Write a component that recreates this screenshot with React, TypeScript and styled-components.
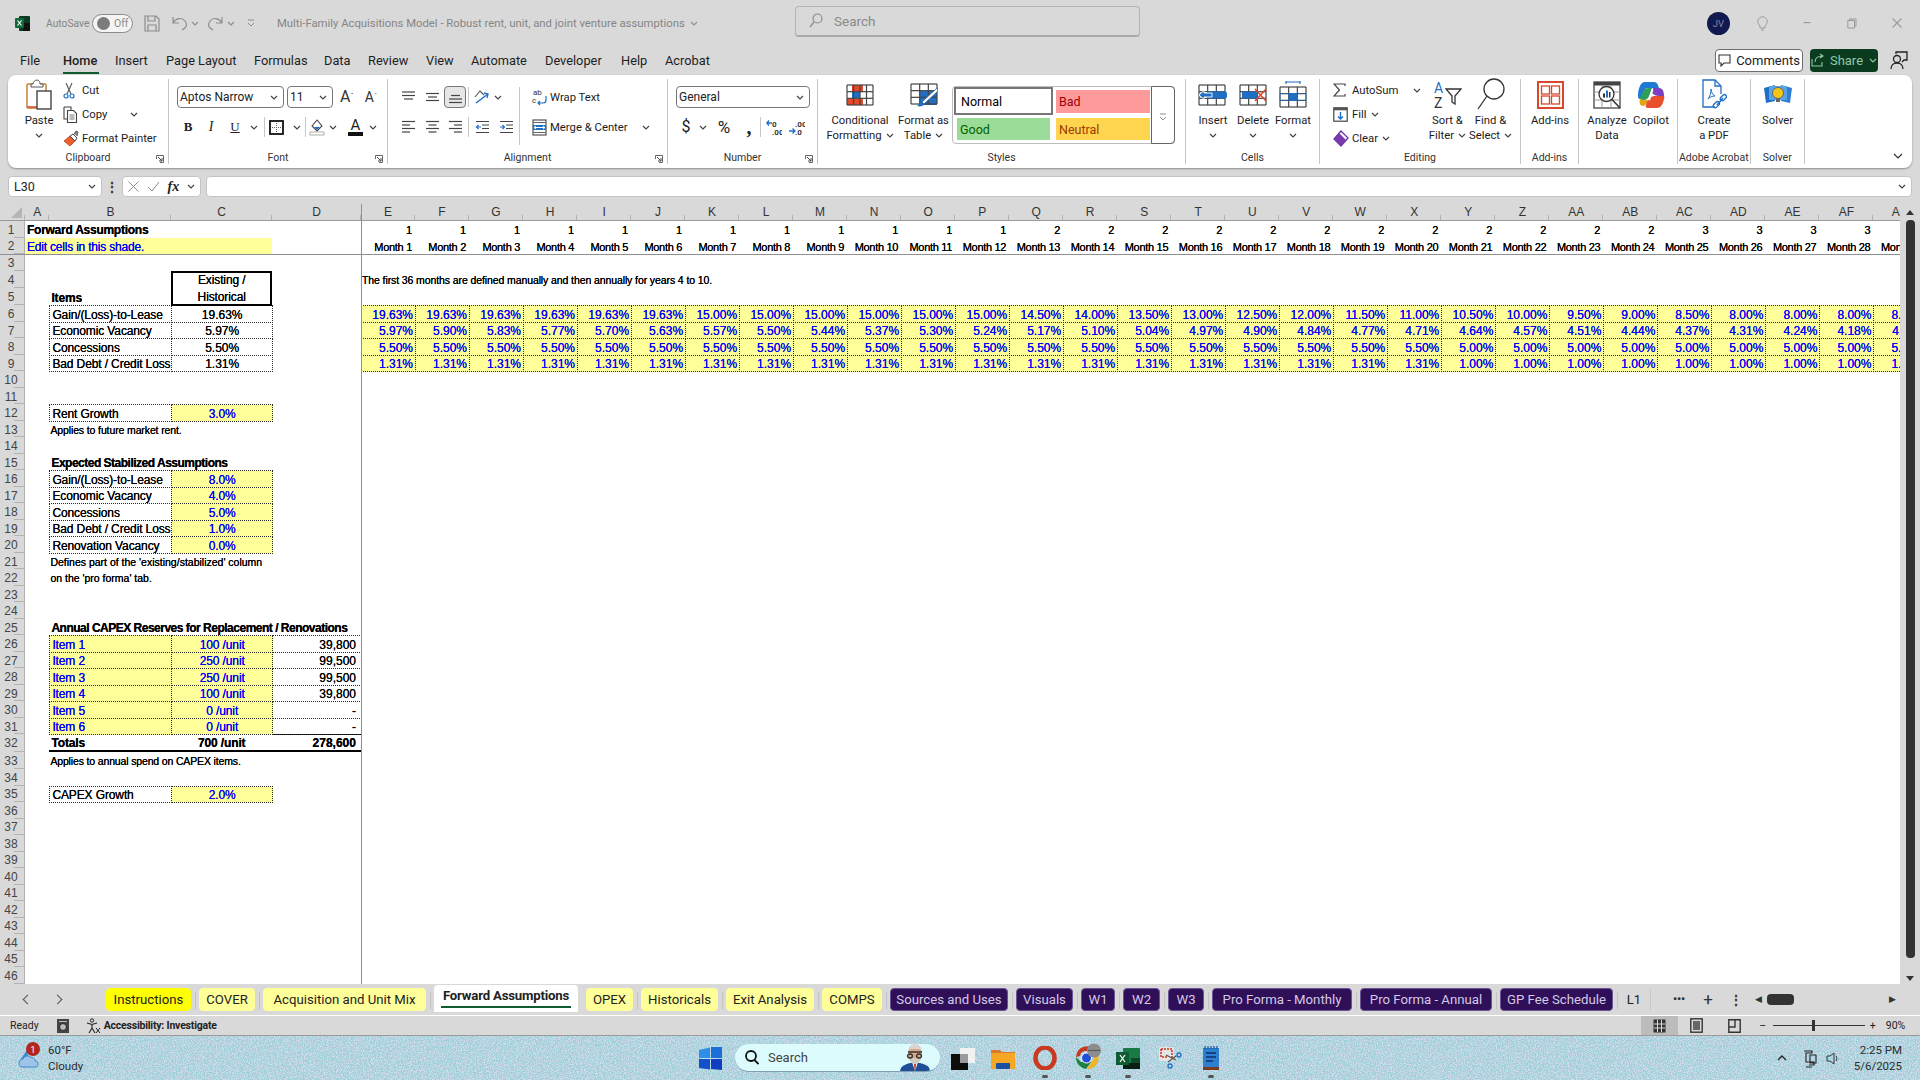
import React from 'react'
import styled, { createGlobalStyle } from 'styled-components'

const UI = `Roboto, 'Liberation Sans', sans-serif`
const CELL = `'Liberation Sans', Arial, sans-serif`

const GlobalStyle = createGlobalStyle`
  html, body { margin: 0; padding: 0; background: #d9d9d9; }
  * { box-sizing: border-box; }
  svg { display: block; flex: none; }
`

/* ---------- small drawing helpers ---------- */

const Ico = ({ w, h, children }: { w: number; h: number; children?: React.ReactNode }) => (
  <svg width={w} height={h} viewBox={`0 0 ${w} ${h}`} fill='none'>
    {children}
  </svg>
)

const Chev = ({ color = '#444' }: { color?: string }) => (
  <Ico w={8} h={5}>
    <path d='M1 1l3 3 3-3' stroke={color} strokeWidth='1.2' />
  </Ico>
)

const GridLines = ({ w, h, cols, rows, color = '#444' }: any) => {
  const out = []
  for (let i = 0; i <= cols; i++) {
    const x = 1 + ((w - 2) * i) / cols
    out.push(<path key={'c' + i} d={`M${x} 1V${h - 1}`} stroke={color} strokeWidth='1.2' />)
  }
  for (let i = 0; i <= rows; i++) {
    const y = 1 + ((h - 2) * i) / rows
    out.push(<path key={'r' + i} d={`M1 ${y}H${w - 1}`} stroke={color} strokeWidth='1.2' />)
  }
  return <>{out}</>
}

const ExcelLogo = () => (
  <Ico w={15} h={15}>
    <rect x='4' y='0' width='11' height='15' rx='1' fill='#0b3a22' />
    <rect x='8' y='7' width='7' height='8' fill='#111' />
    <rect x='0' y='2' width='9' height='10' rx='1' fill='#10693b' />
    <path d='M2.5 4.5l4 5m0-5l-4 5' stroke='#fff' strokeWidth='1.2' />
  </Ico>
)

const SaveIcon = () => (
  <Ico w={16} h={17}>
    <path d='M1 1h11l3 3v12H1z M4 1v5h7V1 M4 16v-6h8v6' stroke='#8d8d8d' strokeWidth='1.2' />
  </Ico>
)

const UndoIcon = ({ flip }: { flip?: boolean }) => (
  <Ico w={17} h={15}>
    <g transform={flip ? 'matrix(-1 0 0 1 17 0)' : undefined}>
      <path d='M2 1v6h6 M2 7c3-5 9-6 12-2s1 7-3 9' stroke='#8d8d8d' strokeWidth='1.2' />
    </g>
  </Ico>
)

const QatIcon = () => (
  <Ico w={8} h={8}>
    <path d='M1 1h6 M1 4l3 3 3-3' stroke='#8d8d8d' strokeWidth='1' />
  </Ico>
)

const SearchGlass = ({ color = '#8d8d8d' }: { color?: string }) => (
  <Ico w={14} h={15}>
    <circle cx='8.5' cy='5.5' r='4.5' stroke={color} strokeWidth='1.2' />
    <path d='M5 9l-4 5' stroke={color} strokeWidth='1.3' />
  </Ico>
)

const Bulb = () => (
  <Ico w={11} h={15}>
    <path d='M3 10C1 8 .8 6.5 .8 5.5a4.7 4.7 0 0 1 9.4 0c0 1-.2 2.5-2.2 4.5v2H3z M4 14h3' stroke='#9a9a9a' strokeWidth='1' />
  </Ico>
)

const PasteIcon = () => (
  <Ico w={28} h={32}>
    <rect x='2' y='5' width='19' height='24' rx='1' fill='#fff' stroke='#c5813a' strokeWidth='1.5' />
    <path d='M2 28h19' stroke='#d9482b' strokeWidth='1.5' />
    <path d='M8 5c0-2 2-4 4-4s3 2 3 4h3v3H6V5z' fill='#fff' stroke='#555' strokeWidth='1' />
    <rect x='12' y='12' width='14' height='18' fill='#fff' stroke='#444' strokeWidth='1.4' />
  </Ico>
)

const CutIcon = () => (
  <Ico w={12} h={17}>
    <path d='M3 1l5 11M9 1L4 12' stroke='#555' strokeWidth='1.1' />
    <circle cx='3' cy='14' r='2' stroke='#1f6fc4' strokeWidth='1.2' />
    <circle cx='9' cy='14' r='2' stroke='#1f6fc4' strokeWidth='1.2' />
  </Ico>
)

const CopyIcon = () => (
  <Ico w={15} h={17}>
    <path d='M1 1h7v3 M1 1v12h3' stroke='#444' strokeWidth='1.1' />
    <path d='M4.5 4.5h6l3 3v9h-9z' fill='#fff' stroke='#444' strokeWidth='1.1' />
    <path d='M6.5 9h5M6.5 11h5M6.5 13h5' stroke='#777' />
  </Ico>
)

const PainterIcon = () => (
  <Ico w={16} h={17}>
    <path d='M1 11l6-5 5 5-5 5z' fill='#e9602d' stroke='#c53b1a' strokeWidth='.8' />
    <path d='M7 6l5 5 2-3-4-4z' fill='#fff' stroke='#444' />
    <path d='M11 4l2-3 2 1-1 4' fill='#888' stroke='#444' strokeWidth='.8' />
  </Ico>
)

const BorderIcon = () => (
  <Ico w={15} h={15}>
    <rect x='1' y='1' width='13' height='13' stroke='#111' strokeWidth='1.8' />
    <path d='M7.5 3v9M3 7.5h9' stroke='#666' strokeDasharray='1 1' />
  </Ico>
)

const FillIcon = () => (
  <Ico w={16} h={18}>
    <path d='M3 8l5-6 5 6-5 5z' fill='#fff' stroke='#444' strokeWidth='1.1' />
    <path d='M5 9h6l-3 3z' fill='#1f6fc4' />
    <rect x='1' y='14' width='14' height='3' fill='#fff' stroke='#999' strokeWidth='.8' />
  </Ico>
)

const AlignIcon = ({ lines }: { lines: string[] }) => (
  <Ico w={15} h={14}>
    {lines.map((d, i) => (
      <path key={i} d={d} stroke='#444' strokeWidth='1.2' />
    ))}
  </Ico>
)

const OrientIcon = () => (
  <Ico w={17} h={16}>
    <path d='M2 8l5-6 4 4' stroke='#555' strokeWidth='1.1' />
    <path d='M3 14L15 5' stroke='#1f6fc4' strokeWidth='1.5' />
    <path d='M11 4l4 1-1 4' stroke='#1f6fc4' strokeWidth='1.3' />
  </Ico>
)

const IndentIcon = ({ inc }: { inc?: boolean }) => (
  <Ico w={15} h={14}>
    <path d='M1 1.5h13M7 5h7M7 8.5h7M1 12.5h13' stroke='#444' strokeWidth='1.2' />
    {inc ? (
      <path d='M1 7h4M3.5 5l2 2-2 2' stroke='#1f6fc4' strokeWidth='1.2' />
    ) : (
      <path d='M6 7H1.5M3.5 5l-2 2 2 2' stroke='#1f6fc4' strokeWidth='1.2' />
    )}
  </Ico>
)

const WrapIcon = () => (
  <Ico w={15} h={18}>
    <text x='1' y='7' fontFamily={UI} fontSize='8' fill='#333'>ab</text>
    <text x='0' y='15' fontFamily={UI} fontSize='8' fill='#333'>c</text>
    <path d='M14 8v4c0 2-1 3-3 3H6M8 13l-2 2 2 2' stroke='#1f6fc4' strokeWidth='1.2' />
  </Ico>
)

const MergeIcon = () => (
  <Ico w={15} h={17}>
    <rect x='1' y='1' width='13' height='15' fill='#fff' stroke='#444' strokeWidth='1.1' />
    <rect x='1' y='6' width='13' height='5' fill='#1f6fc4' />
    <path d='M2 8.5h11M4 7l-2 1.5L4 10M11 7l2 1.5L11 10' stroke='#fff' />
    <path d='M1 3.5h13M1 13.5h13' stroke='#666' />
  </Ico>
)

const DecimalIcon = ({ inc }: { inc?: boolean }) => (
  <Ico w={16} h={17}>
    <text x='6' y='7.5' fontFamily={UI} fontWeight='700' fontSize='8' fill='#333'>{inc ? '.00' : '0'}</text>
    <text x='6' y='15.5' fontFamily={UI} fontWeight='700' fontSize='8' fill='#333'>{inc ? '.0' : '.00'}</text>
    {inc ? (
      <path d='M0 12h6M3.5 9.5L6 12l-2.5 2.5' stroke='#1f6fc4' strokeWidth='1.3' />
    ) : (
      <path d='M6 4H.8M3 1.5L.8 4 3 6.5' stroke='#1f6fc4' strokeWidth='1.3' />
    )}
  </Ico>
)

const CondFormatIcon = () => (
  <Ico w={28} h={22}>
    <rect x='6' y='1' width='11' height='7' fill='#e2492a' />
    <rect x='6' y='8' width='8' height='6' fill='#1f6fc4' />
    <rect x='1' y='15' width='16' height='6' fill='#e2492a' />
    <GridLines w={28} h={22} cols={4} rows={3} />
  </Ico>
)

const FormatTableIcon = () => (
  <Ico w={28} h={24}>
    <rect x='10' y='8' width='17' height='14' fill='#1f6fc4' />
    <GridLines w={28} h={22} cols={3} rows={3} />
    <path d='M27 5L12 19l2 2L28 8z' fill='#fff' stroke='#2c5f9e' strokeWidth='.8' />
    <path d='M12 19c-3 0-3 3-5 4 3 1 7 0 7-2z' fill='#1f6fc4' />
  </Ico>
)

const InsertIcon = () => (
  <Ico w={30} h={22}>
    <GridLines w={28} h={22} cols={3} rows={3} />
    <rect x='9' y='7.5' width='20' height='7' rx='2' fill='#1f6fc4' />
    <path d='M14 9H6V6.5L1 11l5 4.5V13h8z' fill='#1f6fc4' stroke='#fff' strokeWidth='.9' />
  </Ico>
)

const DeleteIcon = () => (
  <Ico w={28} h={22}>
    <GridLines w={28} h={22} cols={3} rows={3} />
    <rect x='3' y='7.5' width='15' height='7' fill='#1f6fc4' />
    <path d='M16 5l11 12M27 5L16 17' stroke='#e2492a' strokeWidth='1.6' />
  </Ico>
)

const FormatCellsIcon = () => (
  <Ico w={28} h={27}>
    <path d='M7 1h14M7 0v3M21 0v3' stroke='#1f6fc4' strokeWidth='1.2' />
    <g transform='translate(0 5)'>
      <GridLines w={28} h={22} cols={3} rows={3} />
      <rect x='9.5' y='7.5' width='9' height='7' fill='#1f6fc4' />
      <rect x='1' y='7.5' width='26' height='7' stroke='#1f6fc4' strokeWidth='.6' />
    </g>
  </Ico>
)

const SigmaIcon = () => (
  <Ico w={13} h={14}>
    <path d='M12 3V1H1l5.5 6L1 13h11v-2' stroke='#444' strokeWidth='1.2' />
  </Ico>
)

const FillDownIcon = () => (
  <Ico w={15} h={15}>
    <rect x='.8' y='.8' width='13.4' height='13.4' stroke='#444' strokeWidth='1.2' />
    <rect x='.8' y='.8' width='13.4' height='2.5' fill='#555' />
    <path d='M7.5 5v7M5 9.5l2.5 2.5L10 9.5' stroke='#1f6fc4' strokeWidth='1.4' />
  </Ico>
)

const EraserIcon = () => (
  <Ico w={16} h={17}>
    <path d='M1 9l7-8 7 7-7 8z' fill='#fff' stroke='#6a2fa0' strokeWidth='1.3' />
    <path d='M1 9l5-6 7 7-5 6z' fill='#7a3bb0' />
  </Ico>
)

const SortIcon = () => (
  <Ico w={28} h={28}>
    <text x='0' y='12' fontFamily={UI} fontSize='14' fill='#1f6fc4'>A</text>
    <text x='0' y='27' fontFamily={UI} fontSize='14' fill='#333'>Z</text>
    <path d='M12 8h15l-6 7v8l-3-2v-6z' stroke='#333' strokeWidth='1.3' />
  </Ico>
)

const BigGlass = () => (
  <Ico w={28} h={33}>
    <circle cx='17' cy='11' r='10' stroke='#333' strokeWidth='1.3' />
    <path d='M10 18L1 31' stroke='#333' strokeWidth='1.3' />
  </Ico>
)

const AddinsIcon = () => (
  <Ico w={27} h={28}>
    <rect x='1' y='1' width='25' height='26' fill='#fff' stroke='#d9482b' strokeWidth='2' />
    <rect x='4.5' y='5' width='8' height='8' stroke='#d9482b' strokeWidth='1.3' />
    <rect x='14.5' y='5' width='8' height='8' stroke='#d9482b' strokeWidth='1.3' />
    <rect x='4.5' y='15' width='8' height='8' stroke='#d9482b' strokeWidth='1.3' />
    <rect x='14.5' y='15' width='8' height='8' stroke='#d9482b' strokeWidth='1.3' />
  </Ico>
)

const AnalyzeIcon = () => (
  <Ico w={28} h={28}>
    <rect x='1' y='1' width='26' height='26' fill='#fff' stroke='#444' strokeWidth='1.3' />
    <rect x='1' y='1' width='26' height='3.5' fill='#444' />
    <path d='M1 11h26M1 19h26M9 4v23M18 4v23' stroke='#999' />
    <circle cx='13.5' cy='13' r='7.5' fill='#fff' stroke='#333' strokeWidth='1.3' />
    <path d='M19 18.5L27 27' stroke='#333' strokeWidth='1.5' />
    <rect x='10' y='12.5' width='2' height='4' fill='#333' />
    <rect x='13' y='9.5' width='2' height='7' fill='#1f6fc4' />
    <rect x='16' y='11' width='1.5' height='5.5' fill='#333' />
  </Ico>
)

const CopilotIcon = () => (
  <Ico w={28} h={28}>
    <path d='M8 1h9c2 0 3 1 4 3l1 3H12C8 7 7 9 6 12l-2 5c-1 2-3 1-3-2 0-6 2-14 7-14z' fill='#1f7ad6' />
    <path d='M3 17l3-6c1-3 3-4 6-4h3l-2 6c-1 3-3 6-6 6H5c-1 0-2-1-2-2z' fill='#2e9e57' />
    <path d='M6 19h5l-1 3c-1 2-3 3-5 3-2-1-3-3-2-7z' fill='#e5a318' />
    <path d='M16 7h6c4 0 5 4 5 8v1l-5-1c-3 0-5-1-7-3z' fill='#7b3fbf' />
    <path d='M20 27h-9c-2 0-3-1-2-3l1-3c1-2 4-6 7-6h9c1 0 2 1 1 3-1 5-3 9-7 9z' fill='#ea4f2c' />
    <path d='M14.5 8l2 .5-3.5 11-2-.5z' fill='#fff' />
  </Ico>
)

const PdfIcon = () => (
  <Ico w={26} h={32}>
    <path d='M14 28H2V1h12l6 6v8' stroke='#1f6fc4' strokeWidth='1.3' />
    <path d='M14 1v6h6' stroke='#1f6fc4' strokeWidth='1.3' />
    <path d='M7 20c2-2 3-7 3-10 0 3 2 6 4 7-3 0-5 1-7 3z' stroke='#1f6fc4' />
    <path d='M16 26l6-7' stroke='#1f6fc4' strokeWidth='1.6' />
    <rect x='12' y='24' width='7' height='4' rx='2' transform='rotate(-45 15 26)' stroke='#1f6fc4' strokeWidth='1.3' />
    <rect x='19' y='17' width='7' height='4' rx='2' transform='rotate(-45 22 19)' stroke='#1f6fc4' strokeWidth='1.3' />
  </Ico>
)

const SolverIcon = () => (
  <Ico w={30} h={24}>
    <path d='M1 5l11-3v16L3 20z' fill='#1f6fc4' />
    <path d='M29 5L18 2v16l9 2z' fill='#2f7ed8' />
    <path d='M6 3h18v14H6z' fill='#5aa2e6' />
    <circle cx='15' cy='10' r='5.5' fill='#f5c518' stroke='#555' strokeWidth='.8' />
    <rect x='13' y='15' width='4' height='4' fill='#666' />
  </Ico>
)

const CommentIcon = ({ color = '#333' }: { color?: string }) => (
  <Ico w={13} h={13}>
    <path d='M1 1h11v8H6l-3 3V9H1z' stroke={color} strokeWidth='1.1' />
  </Ico>
)

const ShareIcon = () => (
  <Ico w={13} h={14}>
    <path d='M1 6v7h10V9' stroke='#8fc7a8' strokeWidth='1.1' />
    <path d='M4 9c0-4 3-6 8-6M9 1l3 2-3 2' stroke='#8fc7a8' strokeWidth='1.1' />
  </Ico>
)

const CoachIcon = () => (
  <Ico w={18} h={19}>
    <circle cx='7' cy='8' r='3.5' stroke='#222' strokeWidth='1.3' />
    <path d='M1 18c0-4 3-6 6-6s6 2 6 6' stroke='#222' strokeWidth='1.3' />
    <path d='M6 3V1h11v8h-3l-2 2' stroke='#222' strokeWidth='1.3' />
  </Ico>
)

const Launcher = () => (
  <Ico w={8} h={8}>
    <path d='M.5 4V.5H7.5V7.5H4' stroke='#666' />
    <path d='M2 2l4 4M6 3v3H3' stroke='#444' />
  </Ico>
)

const MacroIcon = () => (
  <Ico w={14} h={16}>
    <rect x='1' y='1' width='12' height='14' fill='#444' />
    <circle cx='7' cy='9' r='3.5' fill='#bbb' stroke='#222' />
    <path d='M3 3.5h8' stroke='#bbb' />
  </Ico>
)

const AccessIcon = () => (
  <Ico w={15} h={16}>
    <circle cx='6' cy='2.5' r='1.7' stroke='#222' />
    <path d='M1 5l5 1.5L11 5M6 6.5V10l-3 5M6 10l3 5' stroke='#222' strokeWidth='1.1' />
    <path d='M10 10l4 5M14 10l-4 5' stroke='#222' />
  </Ico>
)

const ViewNormal = () => (
  <Ico w={13} h={14}>
    <rect x='.5' y='.5' width='12' height='13' fill='#333' />
    <path d='M4.5 1v12M8.5 1v12M1 5h11M1 9h11' stroke='#ddd' />
  </Ico>
)

const ViewLayout = () => (
  <Ico w={13} h={15}>
    <rect x='.8' y='.8' width='11.4' height='13.4' stroke='#333' strokeWidth='1.4' />
    <rect x='3' y='3' width='7' height='9' fill='#666' />
  </Ico>
)

const ViewBreak = () => (
  <Ico w={13} h={14}>
    <path d='M.8 13.2V.8H12.2V13.2zM.8 8H7V.8' stroke='#333' strokeWidth='1.4' />
  </Ico>
)

const WeatherIcon = () => (
  <Ico w={24} h={20}>
    <path d='M9 2L1 14h10z' fill='#3d88cf' />
    <path d='M5 19c-3 0-4-2-4-4s2-4 4-4c1-3 5-4 7-2 3 0 5 2 5 4 2 0 3 1 3 3s-1 3-3 3z' fill='#9fc4ea' stroke='#3d88cf' />
  </Ico>
)

const WinLogo = () => (
  <Ico w={23} h={23}>
    <path d='M0 3l11-2.5V11H0z' fill='#2f8fe8' />
    <path d='M12 0l11-1v12H12z' fill='#1c6fd8' />
    <path d='M0 12h11v10.5L0 21z' fill='#1450c8' />
    <path d='M12 12h11v11l-11-1z' fill='#0f3fbf' />
  </Ico>
)

const BingGuy = () => (
  <Ico w={32} h={28}>
    <path d='M1 28c1-6 7-7 10-8h10c3 1 10 2 10 8z' fill='#1f4f96' />
    <path d='M13 19l3 9 3-9z' fill='#fff' />
    <path d='M15 21h2l-.5 6h-1z' fill='#b33a2a' />
    <ellipse cx='16' cy='11' rx='7' ry='9' fill='#d8a888' />
    <path d='M9 10c0-6 3-9 7-9s7 3 7 8l-2-3H11z' fill='#d9d4cc' />
    <path d='M10 14c1 6 4 7 6 7s5-1 6-7l-3 1h-6z' fill='#cfc9bf' />
    <path d='M9 9h14M11 11a2.5 2 0 1 0 .01 0M20 11a2.5 2 0 1 0 .01 0' stroke='#333' strokeWidth='1.3' />
  </Ico>
)

const TaskViewIcon = () => (
  <Ico w={24} h={23}>
    <rect x='9' y='1' width='15' height='15' fill='#f2f2f2' />
    <rect x='0' y='7' width='17' height='16' fill='#0c0c0c' />
    <rect x='9' y='7' width='8' height='9' fill='#9a9a9a' />
  </Ico>
)

const FolderIcon = () => (
  <Ico w={24} h={21}>
    <path d='M0 2h9l2 2h13v5H0z' fill='#d9792b' />
    <rect x='0' y='5' width='24' height='16' fill='#f5a623' />
    <rect x='5' y='15' width='14' height='6' rx='1' fill='#1b4fa0' />
  </Ico>
)

const OperaIcon = () => (
  <Ico w={24} h={24}>
    <ellipse cx='12' cy='12' rx='9.5' ry='10.5' stroke='#c8391f' strokeWidth='4.5' />
  </Ico>
)

const ChromeIcon = () => (
  <Ico w={28} h={30}>
    <path d='M2 14a11 11 0 0 1 20-6H12a6 6 0 0 0-6 5z' fill='#c8391f' />
    <path d='M2 14c0 6 4 11 10 12l5-7H7z' fill='#22803f' />
    <path d='M22 8a11 11 0 0 1-9 18l5-8a6 6 0 0 0-1-10z' fill='#f0b429' />
    <circle cx='12.5' cy='15' r='5' fill='#1f4fd8' stroke='#fff' strokeWidth='1' />
    <circle cx='20' cy='7.5' r='7' fill='#8c8c8c' />
    <path d='M14 7.5h12' stroke='#555' />
  </Ico>
)

const ExcelTask = () => (
  <Ico w={24} h={21}>
    <rect x='7' y='0' width='17' height='21' rx='1' fill='#1a7a45' />
    <rect x='15' y='10' width='9' height='11' fill='#0b4a2a' />
    <rect x='7' y='15' width='17' height='6' fill='#0a1f14' />
    <rect x='0' y='4' width='13' height='13' fill='#0f5c34' />
    <path d='M4 7l5 7m0-7l-5 7' stroke='#fff' strokeWidth='1.2' />
  </Ico>
)

const SnipIcon = () => (
  <Ico w={24} h={24}>
    <rect x='1' y='1' width='15' height='14' rx='2' fill='#e8e4e4' />
    <path d='M3 3h11v10' stroke='#c8391f' strokeWidth='1.6' strokeDasharray='2 1' />
    <path d='M3 3v8h6' stroke='#c8391f' strokeWidth='1.6' strokeDasharray='2 1' />
    <path d='M8 9l10 5M10 16l8-6' stroke='#555' strokeWidth='1.2' />
    <circle cx='21' cy='9' r='2' stroke='#1f6fc4' strokeWidth='1.3' />
    <circle cx='12' cy='20' r='2' stroke='#1f6fc4' strokeWidth='1.3' />
  </Ico>
)

const NotesIcon = () => (
  <Ico w={18} h={26}>
    <path d='M1 3h16v20H1z' fill='#2d7fd0' />
    <path d='M3 1v3M6 1v3M9 1v3M12 1v3M15 1v3' stroke='#1a4f9a' strokeWidth='1.2' />
    <path d='M4 8h10M4 12h10M4 16h7' stroke='#0d2f6b' strokeWidth='1.4' />
    <rect x='1' y='22' width='16' height='3' fill='#7a3b1f' />
  </Ico>
)

const SearchGlassDark = () => (
  <Ico w={14} h={15}>
    <circle cx='6' cy='6' r='5' stroke='#111' strokeWidth='1.8' />
    <path d='M9.5 10l4 4' stroke='#111' strokeWidth='1.8' />
  </Ico>
)

/* ---------- window chrome ---------- */

const Page = styled.div`
  width: 1920px;
  height: 1080px;
  overflow: hidden;
  display: flex;
  flex-direction: column;
  background: #d9d9d9;
  font-family: ${UI};
  color: #222;
`

const TitleBar = styled.div`
  height: 42px;
  flex: none;
  display: flex;
  align-items: center;
  padding-left: 15px;
  padding-top: 4px;
  color: #858585;
  font-size: 10.3px;
`

const Slot = styled.div<{ $w?: number; $ml?: number; $start?: boolean }>`
  flex: none;
  display: flex;
  align-items: center;
  justify-content: ${p => (p.$start ? 'flex-start' : 'center')};
  width: ${p => (p.$w ? `${p.$w}px` : 'auto')};
  margin-left: ${p => p.$ml || 0}px;
  white-space: nowrap;
`

const Toggle = styled.div`
  width: 41px;
  height: 19px;
  border: 1px solid #8a8a8a;
  border-radius: 10px;
  background: #f4f4f4;
  display: flex;
  align-items: center;
  padding-left: 4px;
  gap: 4px;
  font-size: 10.5px;
  color: #8a8a8a;

  &::before {
    content: '';
    width: 13px;
    height: 13px;
    border-radius: 50%;
    background: #7c7c7c;
  }
`

const DocTitle = styled.span`
  display: flex;
  align-items: center;
  gap: 5px;
  font-size: 11.3px;
`

const SearchBox = styled.div`
  width: 345px;
  height: 31px;
  margin-left: 100px;
  margin-top: -4px;
  flex: none;
  display: flex;
  align-items: center;
  gap: 11px;
  padding-left: 13px;
  border: 1px solid #b4b4b4;
  border-bottom: 2px solid #aaa;
  border-radius: 4px;
  font-size: 13.5px;
  color: #8a8a8a;
`

const Avatar = styled.div`
  width: 23px;
  height: 23px;
  border-radius: 50%;
  background: #111a4e;
  color: #7f86a8;
  font-size: 9.5px;
  display: flex;
  align-items: center;
  justify-content: center;
`

const Glyph = styled.span<{ $size?: number; $color?: string; $weight?: number }>`
  font-size: ${p => p.$size || 14}px;
  color: ${p => p.$color || '#9a9a9a'};
  font-weight: ${p => p.$weight || 400};
  line-height: 1;
`

const MenuRow = styled.div`
  height: 33px;
  flex: none;
  display: flex;
  align-items: center;
  padding: 3px 0 0 20px;
  font-size: 12.8px;
  color: #1e1e1e;
`

const MenuTab = styled.div<{ $w: number; $active?: boolean }>`
  width: ${p => p.$w}px;
  position: relative;
  font-weight: ${p => (p.$active ? 500 : 400)};

  &::after {
    content: '';
    display: ${p => (p.$active ? 'block' : 'none')};
    position: absolute;
    left: 0;
    bottom: -6px;
    width: 36px;
    height: 2px;
    background: #0e5c2f;
  }
`

const MenuRight = styled.div`
  margin-left: auto;
  display: flex;
  align-items: center;
  padding-right: 12px;
  gap: 7px;
`

const CommentsBtn = styled.div`
  width: 88px;
  height: 23px;
  display: flex;
  align-items: center;
  justify-content: center;
  gap: 5px;
  background: #fff;
  border: 1px solid #6e6e6e;
  border-radius: 4px;
  font-size: 13px;
  color: #222;
`

const ShareBtn = styled.div`
  width: 68px;
  height: 23px;
  display: flex;
  align-items: center;
  justify-content: center;
  gap: 6px;
  background: #0a3b1e;
  border-radius: 4px;
  font-size: 13px;
  color: #8fc7a8;
  margin-right: 5px;
`

/* ---------- ribbon ---------- */

const Ribbon = styled.div`
  height: 93px;
  flex: none;
  margin: 0 8px;
  background: #fff;
  border-radius: 8px;
  box-shadow: 0 1px 2px rgba(0, 0, 0, 0.35);
  display: flex;
  padding-top: 4px;
  font-size: 11.3px;
  color: #1c1c1c;
  position: relative;
`

const Group = styled.div<{ $w: number }>`
  width: ${p => p.$w}px;
  height: 85px;
  flex: none;
  display: flex;
  flex-direction: column;
  border-right: 1.5px solid #c6c6c6;
  position: relative;
`

const GroupBody = styled.div<{ $pl?: number; $col?: boolean }>`
  height: 73px;
  flex: none;
  display: flex;
  flex-direction: ${p => (p.$col ? 'column' : 'row')};
  padding-left: ${p => p.$pl || 0}px;
`

const GroupLabel = styled.div`
  height: 12px;
  line-height: 12px;
  text-align: center;
  font-size: 10.5px;
  color: #333;
  white-space: nowrap;
`

const LauncherSpot = styled.div`
  position: absolute;
  right: 4px;
  bottom: 1px;
`

const BigBtn = styled.div<{ $w: number }>`
  width: ${p => p.$w}px;
  flex: none;
  display: flex;
  flex-direction: column;
  align-items: center;
  line-height: 15px;
  white-space: nowrap;
`

const BigIcon = styled.div`
  height: 34px;
  padding-bottom: 3px;
  display: flex;
  align-items: center;
  justify-content: center;
`

const InlineChev = styled.span`
  display: inline-flex;
  align-items: center;
  gap: 4px;
`

const ChevLine = styled.div`
  height: 15px;
  display: flex;
  align-items: center;
`

const SmallCol = styled.div<{ $ml?: number; $w?: number }>`
  display: flex;
  flex-direction: column;
  margin-left: ${p => p.$ml || 0}px;
  width: ${p => (p.$w ? `${p.$w}px` : 'auto')};
`

const SmallBtn = styled.div<{ $w?: number }>`
  height: 24px;
  display: flex;
  align-items: center;
  white-space: nowrap;
  width: ${p => (p.$w ? `${p.$w}px` : 'auto')};
  position: relative;
  top: -1px;
`

const SmallIcon = styled.div`
  width: 19px;
  display: flex;
  justify-content: flex-start;
`

const ToolRow = styled.div<{ $mt?: number }>`
  display: flex;
  align-items: center;
  height: 22px;
  margin-top: ${p => p.$mt || 0}px;
`

const Select = styled.div<{ $w: number }>`
  width: ${p => p.$w}px;
  height: 22px;
  flex: none;
  display: flex;
  align-items: center;
  justify-content: space-between;
  padding: 0 5px 0 2px;
  border: 1px solid #777;
  border-radius: 4px;
  font-size: 12px;
  color: #222;
`

const Sep = styled.div<{ $h?: number; $ml?: number; $mr?: number }>`
  width: 1px;
  height: ${p => p.$h || 20}px;
  flex: none;
  background: #c6c6c6;
  margin-left: ${p => p.$ml || 0}px;
  margin-right: ${p => p.$mr || 0}px;
`

const Pressed = styled.div`
  width: 22px;
  height: 22px;
  display: flex;
  align-items: center;
  justify-content: center;
  background: #e6e6e6;
  border: 1px solid #777;
  border-radius: 4px;
`

const Big = styled.span<{ $w?: number; $i?: boolean; $u?: boolean; $size?: number }>`
  font-family: 'Liberation Serif', serif;
  font-size: ${p => p.$size || 14}px;
  font-weight: ${p => p.$w || 400};
  font-style: ${p => (p.$i ? 'italic' : 'normal')};
  text-decoration: ${p => (p.$u ? 'underline' : 'none')};
  color: #222;
`

const FontColor = styled.div`
  width: 13px;
  display: flex;
  flex-direction: column;
  align-items: center;
  font-size: 15px;
  line-height: 13px;
  color: #222;

  &::after {
    content: '';
    width: 15px;
    height: 4px;
    background: #111;
  }
`

const Gallery = styled.div`
  width: 223px;
  height: 58px;
  margin: 7px 0 0 0;
  flex: none;
  display: flex;
  border: 1px solid #bdbdbd;
  border-radius: 4px;
`

const StyleGrid = styled.div`
  width: 199px;
  display: grid;
  grid-template-columns: 99px 100px;
  grid-template-rows: 28px 27px;
  padding: 0 1px;
`

const StyleChip = styled.div<{ $bg: string; $fg: string; $normal?: boolean }>`
  display: flex;
  align-items: center;
  padding-left: ${p => (p.$normal ? 5 : 3)}px;
  margin: ${p => (p.$normal ? '0' : '3px 3px 2px 3px')};
  background: ${p => p.$bg};
  color: ${p => p.$fg};
  border: ${p => (p.$normal ? '2px solid #777' : 'none')};
  font-size: 12.5px;
`

const GalleryScroll = styled.div`
  flex: 1;
  border: 1px solid #666;
  border-radius: 0 4px 4px 0;
  margin: -1px;
  padding-top: 26px;
  display: flex;
  justify-content: center;
`

const CollapseSpot = styled.div`
  position: absolute;
  right: 9px;
  bottom: 9px;
`

/* ---------- formula bar ---------- */

const FormulaBar = styled.div`
  height: 21px;
  flex: none;
  margin: 8px 8px 0;
  display: flex;
  align-items: stretch;
`

const FormulaBox = styled.div<{ $w?: number; $ml?: number; $grow?: boolean }>`
  width: ${p => (p.$w ? `${p.$w}px` : 'auto')};
  flex: ${p => (p.$grow ? 1 : 'none')};
  margin-left: ${p => p.$ml || 0}px;
  background: #fff;
  border: 1px solid #c4c4c4;
  border-radius: 4px;
  display: flex;
  align-items: center;
  font-size: 12.5px;
  color: #222;
  justify-content: space-between;
  padding: 0 5px;
`

const Dots = styled.div`
  width: 20px;
  flex: none;
  display: flex;
  justify-content: center;
  align-items: center;
  font-weight: 900;
  font-size: 14px;
  color: #333;
`

const Fx = styled.span`
  font-family: 'Liberation Serif', serif;
  font-style: italic;
  font-weight: 700;
  font-size: 14px;
  color: #222;
`

/* ---------- the sheet ---------- */

const COLS = `25px 24.4px 122px 100.6px 89px repeat(29, 54.03px)`

const Workspace = styled.div`
  height: 780px;
  margin-top: 7px;
  flex: none;
  display: flex;
`

const SheetArea = styled.div`
  width: 1900px;
  flex: none;
  overflow: hidden;
  position: relative;
  background: #fff;
`

const HeaderRow = styled.div`
  height: 17px;
  display: grid;
  grid-template-columns: ${COLS};
  background: #d9d9d9;
  border-bottom: 1.5px solid #9a9a9a;
`

const ColHead = styled.div`
  position: relative;
  text-align: center;
  font-family: ${CELL};
  font-size: 12px;
  line-height: 16px;
  color: #333;

  &::after {
    content: '';
    position: absolute;
    right: 0;
    bottom: 0;
    width: 1px;
    height: 5px;
    background: #b3b3b3;
  }
`

const Corner = styled.div`
  position: absolute;
  left: 11px;
  top: 3px;
  border-style: solid;
  border-width: 0 0 11px 11px;
  border-color: transparent transparent #b5b5b5 transparent;
`

const FreezeLine = styled.div`
  position: absolute;
  left: 360.5px;
  top: 0;
  bottom: 0;
  width: 1.5px;
  background: #8f8f8f;
  z-index: 3;
`

const Row = styled.div<{ $h: number; $freeze?: boolean }>`
  height: ${p => p.$h}px;
  display: grid;
  grid-template-columns: ${COLS};
  grid-template-rows: ${p => p.$h}px;
  position: relative;
  ${p => p.$freeze && 'box-shadow: 0 1px 0 #8f8f8f; z-index: 2;'}
`

const RowNum = styled.div`
  grid-column: 1;
  position: relative;
  background: #d9d9d9;
  border-right: 1px solid #b0b0b0;
  font-family: ${CELL};
  font-size: 12px;
  color: #444;
  display: flex;
  align-items: center;
  justify-content: center;
  padding: 1px 2px 0 0;

  &::after {
    content: '';
    position: absolute;
    right: 0;
    bottom: 0;
    width: 10px;
    height: 1px;
    background: #b3b3b3;
  }
`

interface CellProps {
  $c: number | string
  $align?: 'left' | 'center' | 'right'
  $bg?: string
  $blue?: boolean
  $bold?: boolean
  $box?: boolean
  $note?: boolean
  $pl?: number
  $pr?: number
  $pt?: number
  $ls?: number
  $size?: number
}

const Cell = styled.div<CellProps>`
  grid-column: ${p => p.$c};
  display: flex;
  align-items: center;
  justify-content: ${p => (p.$align === 'right' ? 'flex-end' : p.$align === 'center' ? 'center' : 'flex-start')};
  padding: ${p => p.$pt ?? 1}px ${p => p.$pr ?? 2}px 0 ${p => p.$pl ?? 2}px;
  white-space: nowrap;
  min-width: 0;
  font-family: ${CELL};
  font-size: ${p => p.$size ?? (p.$note ? 10.5 : 12)}px;
  font-weight: ${p => (p.$bold ? 700 : 400)};
  letter-spacing: ${p => p.$ls ?? -0.12}px;
  text-shadow: 0 0 0.6px ${p => (p.$blue ? '#0000ff' : '#000')};
  color: ${p => (p.$blue ? '#0000ff' : '#000')};
  background: ${p => p.$bg || 'transparent'};
  ${p => p.$box && 'border: 1px dotted #2a2a2a; margin: 0 -1px -1px 0; z-index: 1;'}
`

const MergedHead = styled.div`
  grid-column: 4;
  height: 35px;
  display: flex;
  align-items: center;
  justify-content: center;
  text-align: center;
  font-family: ${CELL};
  font-size: 12px;
  letter-spacing: -0.12px;
  line-height: 17px;
  padding-top: 1px;
  color: #000;
  text-shadow: 0 0 0.6px #000;
  border: 2px solid #000;
  z-index: 2;
  background: #fff;
`

const TotalsCell = styled(Cell)`
  border-top: 1.5px solid #000;
  border-bottom: 2.5px solid #000;
`

const Scrollbar = styled.div`
  flex: 1;
  position: relative;
  display: flex;
  flex-direction: column;
  align-items: center;
  background: #d9d9d9;
`

const ArrowUp = styled.div`
  margin-top: 6px;
  border-style: solid;
  border-width: 0 4px 5px 4px;
  border-color: transparent transparent #333 transparent;
`

const Thumb = styled.div`
  width: 9px;
  height: 738px;
  margin-top: 5px;
  background: #333;
  border-radius: 4px;
`

const ArrowDown = styled.div`
  margin-top: auto;
  margin-bottom: 3px;
  border-style: solid;
  border-width: 5px 4px 0 4px;
  border-color: #333 transparent transparent transparent;
`

/* ---------- sheet tabs and status ---------- */

const TabsBar = styled.div`
  height: 31px;
  flex: none;
  display: flex;
  align-items: flex-start;
  padding-top: 4px;
`

const TabNav = styled.div`
  width: 106px;
  flex: none;
  height: 23px;
  display: flex;
  align-items: center;
  padding-left: 24px;
  gap: 23px;
`

const NavArrow = styled.span<{ $right?: boolean }>`
  width: 7px;
  height: 7px;
  border-left: 1.2px solid #555;
  border-bottom: 1.2px solid #555;
  transform: rotate(${p => (p.$right ? 225 : 45)}deg);
`

const TabList = styled.div`
  display: flex;
  gap: 8px;
  align-items: flex-start;
`

const Tab = styled.div<{ $w: number; $bg: string; $fg: string; $edge?: string }>`
  width: ${p => p.$w}px;
  height: 23px;
  flex: none;
  display: flex;
  align-items: center;
  justify-content: center;
  border-radius: 4px;
  background: ${p => p.$bg};
  color: ${p => p.$fg};
  border: 1px solid ${p => p.$edge || p.$bg};
  font-size: 13.2px;
  white-space: nowrap;
  position: relative;

  &::after {
    content: '';
    position: absolute;
    right: -5.5px;
    top: 3px;
    width: 1px;
    height: 17px;
    background: #c4c4c4;
  }
`

const ActiveTab = styled.div`
  width: 144px;
  height: 27px;
  margin-top: -3px;
  flex: none;
  display: flex;
  justify-content: center;
  padding-top: 3px;
  background: #fff;
  border-radius: 4px 4px 0 0;
  font-size: 13.2px;
  font-weight: 700;
  letter-spacing: -0.2px;
  color: #222;
  white-space: nowrap;
  position: relative;

  &::after {
    content: '';
    position: absolute;
    left: 7px;
    right: 7px;
    bottom: 4px;
    height: 2px;
    background: #0e5c2f;
  }
`

const TabTail = styled.div`
  display: flex;
  align-items: center;
  height: 23px;
  font-size: 13px;
  color: #222;
`

const ScrollThumb = styled.div`
  width: 27px;
  height: 11px;
  border-radius: 4px;
  background: #333;
`

const WhiteLine = styled.div`
  height: 1px;
  flex: none;
  background: #fff;
`

const StatusBar = styled.div`
  height: 20px;
  flex: none;
  display: flex;
  align-items: center;
  border-bottom: 1px solid #9a9a9a;
  font-size: 10.5px;
  color: #222;
  padding-left: 10px;
`

const AccessText = styled.span`
  font-weight: 700;
  letter-spacing: -0.2px;
  margin-left: 3px;
`

const ViewBtn = styled.div<{ $on?: boolean; $w: number; $ml?: number }>`
  width: ${p => p.$w}px;
  margin-left: ${p => p.$ml || 0}px;
  height: 19px;
  flex: none;
  display: flex;
  align-items: center;
  justify-content: center;
  background: ${p => (p.$on ? '#bcbcbc' : 'transparent')};
`

const ZoomTrack = styled.div`
  width: 92px;
  height: 1px;
  margin: 0 4px 0 5px;
  padding-right: 10px;
  flex: none;
  background: #333;
  display: flex;
  align-items: center;
  justify-content: center;

  &::after {
    content: '';
    width: 3px;
    height: 11px;
    background: #333;
    flex: none;
  }
`

/* ---------- desktop taskbar ---------- */

const Taskbar = styled.div`
  flex: 1;
  position: relative;
  background: #9dd0d6;
  display: flex;
  align-items: center;
  overflow: hidden;
`

const Noise = styled.svg`
  position: absolute;
  inset: 0;
`

const TaskInner = styled.div`
  position: relative;
  width: 100%;
  height: 100%;
  display: flex;
  align-items: center;
`

const Weather = styled.div`
  width: 699px;
  flex: none;
  padding-left: 18px;
  display: flex;
  align-items: center;
  gap: 6px;
`

const WeatherMark = styled.div`
  position: relative;
`

const Badge = styled.div`
  position: absolute;
  left: 8px;
  top: -6px;
  width: 14px;
  height: 14px;
  border-radius: 50%;
  background: #b3261e;
  color: #fff;
  font-size: 9.5px;
  display: flex;
  align-items: center;
  justify-content: center;
`

const TwoLines = styled.div<{ $right?: boolean }>`
  display: flex;
  flex-direction: column;
  align-items: ${p => (p.$right ? 'flex-end' : 'flex-start')};
  font-size: 11.5px;
  line-height: 16px;
  color: #2c2c2c;
`

const TaskSearch = styled.div`
  width: 205px;
  height: 28px;
  margin-left: 13px;
  flex: none;
  display: flex;
  align-items: center;
  gap: 9px;
  padding-left: 10px;
  border-radius: 14px;
  background: #dcfbfd;
  border-bottom: 1.5px solid #7d9fb8;
  font-size: 13px;
  color: #444;
  position: relative;
  overflow: hidden;
`

const GuySpot = styled.div`
  position: absolute;
  right: 9px;
  bottom: 0;
`

const TaskIcon = styled.div<{ $w: number; $ml: number; $running?: boolean }>`
  width: ${p => p.$w}px;
  margin-left: ${p => p.$ml}px;
  flex: none;
  height: 30px;
  display: flex;
  align-items: center;
  justify-content: center;
  position: relative;

  &::after {
    content: '';
    display: ${p => (p.$running ? 'block' : 'none')};
    position: absolute;
    left: 50%;
    bottom: -5px;
    width: 6px;
    height: 3px;
    margin-left: -3px;
    border-radius: 2px;
    background: #555;
  }
`

const Tray = styled.div`
  margin-left: auto;
  display: flex;
  align-items: center;
  padding-right: 18px;
`

/* ---------- data ---------- */

const letters = ['E','F','G','H','I','J','K','L','M','N','O','P','Q','R','S','T','U','V','W','X','Y','Z','AA','AB','AC','AD','AE','AF','AG']
const gtl = ['19.63%','19.63%','19.63%','19.63%','19.63%','19.63%','15.00%','15.00%','15.00%','15.00%','15.00%','15.00%','14.50%','14.00%','13.50%','13.00%','12.50%','12.00%','11.50%','11.00%','10.50%','10.00%','9.50%','9.00%','8.50%','8.00%','8.00%','8.00%','8.00%']
const vacancy = ['5.97%','5.90%','5.83%','5.77%','5.70%','5.63%','5.57%','5.50%','5.44%','5.37%','5.30%','5.24%','5.17%','5.10%','5.04%','4.97%','4.90%','4.84%','4.77%','4.71%','4.64%','4.57%','4.51%','4.44%','4.37%','4.31%','4.24%','4.18%','4.11%']
const concessions = letters.map((_, i) => (i < 20 ? '5.50%' : '5.00%'))
const badDebt = letters.map((_, i) => (i < 20 ? '1.31%' : '1.00%'))
const years = letters.map((_, i) => String(Math.floor(i / 12) + 1))
const months = letters.map((_, i) => `Month ${i + 1}`)

const rowHeight = (n: number) => {
  if (n === 3) return 16.7
  if (n === 4 || n === 5) return 17.3
  if (n === 32) return 17.4
  if (n === 33) return 17.2
  if (n === 34) return 16.8
  return 16.5
}

const YELLOW = '#ffff99'

const Series = ({ values }: { values: string[] }) => (
  <>
    {values.map((v, i) => (
      <Cell key={i} $c={6 + i} $align='right' $bg={YELLOW} $blue $box $ls={0}>
        {v}
      </Cell>
    ))}
  </>
)

const Label = ({ text }: { text: string }) => (
  <Cell $c={3} $box>
    {text}
  </Cell>
)

const Input = ({ text }: { text: string }) => (
  <Cell $c={4} $align='center' $bg={YELLOW} $blue $box>
    {text}
  </Cell>
)

const Plain = ({ text }: { text: string }) => (
  <Cell $c={4} $align='center' $box $ls={0}>
    {text}
  </Cell>
)

const capex: Record<number, [string, string, string]> = {
  26: ['Item 1', '100 /unit', '39,800'],
  27: ['Item 2', '250 /unit', '99,500'],
  28: ['Item 3', '250 /unit', '99,500'],
  29: ['Item 4', '100 /unit', '39,800'],
  30: ['Item 5', '0 /unit', '-'],
  31: ['Item 6', '0 /unit', '-'],
}

const rowContent = (n: number) => {
  switch (n) {
    case 1:
      return (
        <>
          <Cell $c='2 / 5' $bold $ls={-0.26} $pt={2}>Forward Assumptions</Cell>
          {years.map((v, i) => (
            <Cell key={i} $c={6 + i} $align='right' $pr={3} $pt={2} $size={11}>{v}</Cell>
          ))}
        </>
      )
    case 2:
      return (
        <>
          <Cell $c='2 / 5' $bg={YELLOW} $blue $pt={2} $ls={-0.2}>Edit cells in this shade.</Cell>
          {months.map((v, i) => (
            <Cell key={i} $c={6 + i} $align='right' $pr={3} $pt={2} $size={11} $ls={-0.3}>{v}</Cell>
          ))}
        </>
      )
    case 4:
      return (
        <>
          <MergedHead>Existing /<br />Historical</MergedHead>
          <Cell $c='6 / 13' $note $pl={1} $pt={2} $ls={-0.1}>The first 36 months are defined manually and then annually for years 4 to 10.</Cell>
        </>
      )
    case 5:
      return <Cell $c={3} $bold $pt={2}>Items</Cell>
    case 6:
      return <><Label text='Gain/(Loss)-to-Lease' /><Plain text='19.63%' /><Series values={gtl} /></>
    case 7:
      return <><Label text='Economic Vacancy' /><Plain text='5.97%' /><Series values={vacancy} /></>
    case 8:
      return <><Label text='Concessions' /><Plain text='5.50%' /><Series values={concessions} /></>
    case 9:
      return <><Label text='Bad Debt / Credit Loss' /><Plain text='1.31%' /><Series values={badDebt} /></>
    case 12:
      return <><Label text='Rent Growth' /><Input text='3.0%' /></>
    case 13:
      return <Cell $c='3 / 5' $note $pl={1}>Applies to future market rent.</Cell>
    case 15:
      return <Cell $c='3 / 5' $bold $ls={-0.5}>Expected Stabilized Assumptions</Cell>
    case 16:
      return <><Label text='Gain/(Loss)-to-Lease' /><Input text='8.0%' /></>
    case 17:
      return <><Label text='Economic Vacancy' /><Input text='4.0%' /></>
    case 18:
      return <><Label text='Concessions' /><Input text='5.0%' /></>
    case 19:
      return <><Label text='Bad Debt / Credit Loss' /><Input text='1.0%' /></>
    case 20:
      return <><Label text='Renovation Vacancy' /><Input text='0.0%' /></>
    case 21:
      return <Cell $c='3 / 5' $note $pl={1} $ls={0}>Defines part of the 'existing/stabilized' column</Cell>
    case 22:
      return <Cell $c='3 / 5' $note $pl={1} $ls={0}>on the 'pro forma' tab.</Cell>
    case 25:
      return <Cell $c='3 / 6' $bold $ls={-0.5}>Annual CAPEX Reserves for Replacement / Renovations</Cell>
    case 26:
    case 27:
    case 28:
    case 29:
    case 30:
    case 31:
      return (
        <>
          <Cell $c={3} $bg={YELLOW} $blue $box>{capex[n][0]}</Cell>
          <Input text={capex[n][1]} />
          <Cell $c={5} $align='right' $box $pr={5} $ls={0}>{capex[n][2]}</Cell>
        </>
      )
    case 32:
      return (
        <>
          <TotalsCell $c={3} $bold>Totals</TotalsCell>
          <TotalsCell $c={4} $align='center' $bold>700 /unit</TotalsCell>
          <TotalsCell $c={5} $align='right' $bold $pr={5} $ls={0}>278,600</TotalsCell>
        </>
      )
    case 33:
      return <Cell $c='3 / 5' $note $pl={1} $ls={-0.15}>Applies to annual spend on CAPEX items.</Cell>
    case 35:
      return <><Label text='CAPEX Growth' /><Input text='2.0%' /></>
    default:
      return null
  }
}

const rowNumbers = Array.from({ length: 46 }, (_, i) => i + 1)
const LIGHT = { bg: '#ffff99', fg: '#222' }
const DARK = { bg: '#2e0f58', fg: '#d6c9e6', edge: '#6b5296' }

const Big1 = ({ w, icon, lines, chev, solo }: any) => (
  <BigBtn $w={w}>
    <BigIcon>{icon}</BigIcon>
    {lines.map((l: string, i: number) =>
      chev && i === lines.length - 1 ? (
        <InlineChev key={i}>{l}<Chev /></InlineChev>
      ) : (
        <span key={i}>{l}</span>
      )
    )}
    {solo && <ChevLine><Chev /></ChevLine>}
  </BigBtn>
)

const App = () => (
  <Page>
    <GlobalStyle />

    <TitleBar>
      <ExcelLogo />
      <Slot $ml={16} $w={40} $start>AutoSave</Slot>
      <Slot $ml={6} $w={41}><Toggle>Off</Toggle></Slot>
      <Slot $ml={11} $w={16}><SaveIcon /></Slot>
      <Slot $ml={11} $w={17}><UndoIcon /></Slot>
      <Slot $ml={3} $w={8}><Chev color='#8d8d8d' /></Slot>
      <Slot $ml={8} $w={17}><UndoIcon flip /></Slot>
      <Slot $ml={3} $w={8}><Chev color='#8d8d8d' /></Slot>
      <Slot $ml={12} $w={8}><QatIcon /></Slot>
      <Slot $ml={22} $w={418} $start>
        <DocTitle>Multi-Family Acquisitions Model - Robust rent, unit, and joint venture assumptions <Chev color='#8d8d8d' /></DocTitle>
      </Slot>
      <SearchBox><SearchGlass />Search</SearchBox>
      <Slot $ml={567} $w={23}><Avatar>JV</Avatar></Slot>
      <Slot $ml={27} $w={11}><Bulb /></Slot>
      <Slot $ml={33} $w={12}><Glyph $size={14}>–</Glyph></Slot>
      <Slot $ml={34} $w={10}>
        <Ico w={10} h={11}><path d='M2.5 2.5V1H9V8H7.5 M.8 2.5H7.5V10H.8z' stroke='#9a9a9a' /></Ico>
      </Slot>
      <Slot $ml={35} $w={10}>
        <Ico w={10} h={10}><path d='M.5.5l9 9m0-9l-9 9' stroke='#9a9a9a' strokeWidth='1.1' /></Ico>
      </Slot>
    </TitleBar>

    <MenuRow>
      <MenuTab $w={43}>File</MenuTab>
      <MenuTab $w={52} $active>Home</MenuTab>
      <MenuTab $w={51}>Insert</MenuTab>
      <MenuTab $w={88}>Page Layout</MenuTab>
      <MenuTab $w={70}>Formulas</MenuTab>
      <MenuTab $w={44}>Data</MenuTab>
      <MenuTab $w={58}>Review</MenuTab>
      <MenuTab $w={45}>View</MenuTab>
      <MenuTab $w={74}>Automate</MenuTab>
      <MenuTab $w={76}>Developer</MenuTab>
      <MenuTab $w={44}>Help</MenuTab>
      <MenuTab $w={60}>Acrobat</MenuTab>
      <MenuRight>
        <CommentsBtn><CommentIcon />Comments</CommentsBtn>
        <ShareBtn><ShareIcon />Share<Chev color='#8fc7a8' /></ShareBtn>
        <CoachIcon />
      </MenuRight>
    </MenuRow>

    <Ribbon>
      <Group $w={161}>
        <GroupBody $pl={17}>
          <Big1 w={28} icon={<PasteIcon />} lines={['Paste']} solo />
          <SmallCol $ml={10}>
            <SmallBtn><SmallIcon><CutIcon /></SmallIcon>Cut</SmallBtn>
            <SmallBtn><SmallIcon><CopyIcon /></SmallIcon>Copy<Slot $ml={23}><Chev /></Slot></SmallBtn>
            <SmallBtn><SmallIcon><PainterIcon /></SmallIcon>Format Painter</SmallBtn>
          </SmallCol>
        </GroupBody>
        <GroupLabel>Clipboard</GroupLabel>
        <LauncherSpot><Launcher /></LauncherSpot>
      </Group>

      <Group $w={219}>
        <GroupBody $pl={8} $col>
          <ToolRow $mt={7}>
            <Select $w={107}>Aptos Narrow<Chev /></Select>
            <Slot $ml={3}><Select $w={46}>11<Chev /></Select></Slot>
            <Slot $ml={7} $w={14}><Glyph $size={16} $color='#333'>A</Glyph><Glyph $size={8} $color='#333'>ˆ</Glyph></Slot>
            <Slot $ml={10} $w={14}><Glyph $size={14} $color='#333'>A</Glyph><Glyph $size={8} $color='#1f6fc4'>ˇ</Glyph></Slot>
          </ToolRow>
          <ToolRow $mt={8}>
            <Slot $w={22}><Big $w={700} $size={13}>B</Big></Slot>
            <Slot $w={24}><Big $i $size={14}>I</Big></Slot>
            <Slot $w={24}><Big $u $size={13}>U</Big></Slot>
            <Slot $w={14}><Chev /></Slot>
            <Sep $ml={3} $mr={4} />
            <Slot $w={15}><BorderIcon /></Slot>
            <Slot $ml={6} $w={14}><Chev /></Slot>
            <Sep $ml={1} $mr={3} />
            <Slot $w={16}><FillIcon /></Slot>
            <Slot $ml={3} $w={10}><Chev /></Slot>
            <Slot $ml={10} $w={15}><FontColor>A</FontColor></Slot>
            <Slot $ml={6} $w={8}><Chev /></Slot>
          </ToolRow>
        </GroupBody>
        <GroupLabel>Font</GroupLabel>
        <LauncherSpot><Launcher /></LauncherSpot>
      </Group>

      <Group $w={280}>
        <GroupBody>
          <SmallCol $ml={8}>
            <ToolRow $mt={7}>
              <Slot $w={24}><AlignIcon lines={['M1 2h13', 'M1 5.5h13', 'M3 9h9']} /></Slot>
              <Slot $w={24}><AlignIcon lines={['M1 3.5h13', 'M3 7h9', 'M1 10.5h13']} /></Slot>
              <Pressed><AlignIcon lines={['M3 5.5h9', 'M1 9h13', 'M1 12.5h13']} /></Pressed>
              <Sep $ml={2} $mr={4} />
              <Slot $w={17}><OrientIcon /></Slot>
              <Slot $ml={2} $w={12}><Chev /></Slot>
            </ToolRow>
            <ToolRow $mt={8}>
              <Slot $w={24}><AlignIcon lines={['M1 1.5h13', 'M1 5h8', 'M1 8.5h13', 'M1 12h8']} /></Slot>
              <Slot $w={24}><AlignIcon lines={['M1 1.5h13', 'M3.5 5h8', 'M1 8.5h13', 'M3.5 12h8']} /></Slot>
              <Slot $w={22}><AlignIcon lines={['M1 1.5h13', 'M6 5h8', 'M1 8.5h13', 'M6 12h8']} /></Slot>
              <Sep $ml={2} $mr={6} />
              <Slot $w={15}><IndentIcon /></Slot>
              <Slot $ml={9} $w={15}><IndentIcon inc /></Slot>
            </ToolRow>
          </SmallCol>
          <Slot $ml={5}><Sep $h={58} /></Slot>
          <SmallCol $ml={12}>
            <ToolRow $mt={7}>
              <Slot $w={18} $start><WrapIcon /></Slot>Wrap Text
            </ToolRow>
            <ToolRow $mt={8}>
              <Slot $w={18} $start><MergeIcon /></Slot>Merge &amp; Center<Slot $ml={14}><Chev /></Slot>
            </ToolRow>
          </SmallCol>
        </GroupBody>
        <GroupLabel>Alignment</GroupLabel>
        <LauncherSpot><Launcher /></LauncherSpot>
      </Group>

      <Group $w={150}>
        <GroupBody $pl={8} $col>
          <ToolRow $mt={7}><Select $w={134}>General<Chev /></Select></ToolRow>
          <ToolRow $mt={8}>
            <Slot $w={20}><Glyph $size={16} $color='#222'>$</Glyph></Slot>
            <Slot $ml={3} $w={8}><Chev /></Slot>
            <Slot $ml={5} $w={24}><Glyph $size={17} $color='#222'>%</Glyph></Slot>
            <Slot $ml={3} $w={20}><Big $w={700} $size={20}>,</Big></Slot>
            <Sep $ml={1} $mr={4} />
            <Slot $w={17}><DecimalIcon /></Slot>
            <Slot $ml={6} $w={17}><DecimalIcon inc /></Slot>
          </ToolRow>
        </GroupBody>
        <GroupLabel>Number</GroupLabel>
        <LauncherSpot><Launcher /></LauncherSpot>
      </Group>

      <Group $w={368}>
        <GroupBody $pl={7}>
          <Big1 w={70} icon={<CondFormatIcon />} lines={['Conditional', 'Formatting']} chev />
          <Big1 w={57} icon={<FormatTableIcon />} lines={['Format as', 'Table']} chev />
          <Gallery>
            <StyleGrid>
              <StyleChip $bg='#fff' $fg='#000' $normal>Normal</StyleChip>
              <StyleChip $bg='#ff9a9a' $fg='#9c0006'>Bad</StyleChip>
              <StyleChip $bg='#9bdc98' $fg='#006100'>Good</StyleChip>
              <StyleChip $bg='#ffd54f' $fg='#9c3a00'>Neutral</StyleChip>
            </StyleGrid>
            <GalleryScroll><QatIcon /></GalleryScroll>
          </Gallery>
        </GroupBody>
        <GroupLabel>Styles</GroupLabel>
      </Group>

      <Group $w={134}>
        <GroupBody $pl={7}>
          <Big1 w={40} icon={<InsertIcon />} lines={['Insert']} solo />
          <Big1 w={40} icon={<DeleteIcon />} lines={['Delete']} solo />
          <Big1 w={40} icon={<FormatCellsIcon />} lines={['Format']} solo />
        </GroupBody>
        <GroupLabel>Cells</GroupLabel>
      </Group>

      <Group $w={201}>
        <GroupBody $pl={13}>
          <SmallCol $w={93}>
            <SmallBtn><SmallIcon><SigmaIcon /></SmallIcon>AutoSum<Slot $ml={15}><Chev /></Slot></SmallBtn>
            <SmallBtn><SmallIcon><FillDownIcon /></SmallIcon>Fill<Slot $ml={4}><Chev /></Slot></SmallBtn>
            <SmallBtn><SmallIcon><EraserIcon /></SmallIcon>Clear<Slot $ml={4}><Chev /></Slot></SmallBtn>
          </SmallCol>
          <Big1 w={43} icon={<SortIcon />} lines={['Sort &', 'Filter']} chev />
          <Big1 w={43} icon={<BigGlass />} lines={['Find &', 'Select']} chev />
        </GroupBody>
        <GroupLabel>Editing</GroupLabel>
      </Group>

      <Group $w={58}>
        <GroupBody>
          <Big1 w={58} icon={<AddinsIcon />} lines={['Add-ins']} />
        </GroupBody>
        <GroupLabel>Add-ins</GroupLabel>
      </Group>

      <Group $w={99}>
        <GroupBody $pl={6}>
          <Big1 w={44} icon={<AnalyzeIcon />} lines={['Analyze', 'Data']} />
          <Big1 w={44} icon={<CopilotIcon />} lines={['Copilot']} />
        </GroupBody>
        <GroupLabel>&nbsp;</GroupLabel>
      </Group>

      <Group $w={72.6}>
        <GroupBody>
          <Big1 w={72} icon={<PdfIcon />} lines={['Create', 'a PDF']} />
        </GroupBody>
        <GroupLabel>Adobe Acrobat</GroupLabel>
      </Group>

      <Group $w={54.4}>
        <GroupBody>
          <Big1 w={54} icon={<SolverIcon />} lines={['Solver']} />
        </GroupBody>
        <GroupLabel>Solver</GroupLabel>
      </Group>

      <CollapseSpot>
        <Ico w={10} h={6}><path d='M1 1l4 4 4-4' stroke='#333' strokeWidth='1.2' /></Ico>
      </CollapseSpot>
    </Ribbon>

    <FormulaBar>
      <FormulaBox $w={94}>L30<Chev /></FormulaBox>
      <Dots>⋮</Dots>
      <FormulaBox $w={79}>
        <Ico w={11} h={11}><path d='M.5.5l10 10m0-10l-10 10' stroke='#8d8d8d' /></Ico>
        <Ico w={13} h={11}><path d='M1 6l4 4 7-9' stroke='#8d8d8d' /></Ico>
        <Fx>fx</Fx>
        <Chev />
      </FormulaBox>
      <FormulaBox $ml={5} $grow>
        <span />
        <Chev />
      </FormulaBox>
    </FormulaBar>

    <Workspace>
      <SheetArea>
        <FreezeLine />
        <HeaderRow>
          <ColHead><Corner /></ColHead>
          <ColHead>A</ColHead>
          <ColHead>B</ColHead>
          <ColHead>C</ColHead>
          <ColHead>D</ColHead>
          {letters.map(l => <ColHead key={l}>{l}</ColHead>)}
        </HeaderRow>
        {rowNumbers.map(n => (
          <Row key={n} $h={rowHeight(n)} $freeze={n === 2}>
            <RowNum>{n}</RowNum>
            {rowContent(n)}
          </Row>
        ))}
      </SheetArea>
      <Scrollbar>
        <ArrowUp />
        <Thumb />
        <ArrowDown />
      </Scrollbar>
    </Workspace>

    <TabsBar>
      <TabNav>
        <NavArrow />
        <NavArrow $right />
      </TabNav>
      <TabList>
        <Tab $w={85} $bg='#ffff00' $fg='#222'>Instructions</Tab>
        <Tab $w={56} $bg={LIGHT.bg} $fg={LIGHT.fg}>COVER</Tab>
        <Tab $w={163} $bg={LIGHT.bg} $fg={LIGHT.fg}>Acquisition and Unit Mix</Tab>
        <ActiveTab>Forward Assumptions</ActiveTab>
        <Tab $w={47} $bg={LIGHT.bg} $fg={LIGHT.fg}>OPEX</Tab>
        <Tab $w={77} $bg={LIGHT.bg} $fg={LIGHT.fg}>Historicals</Tab>
        <Tab $w={88} $bg={LIGHT.bg} $fg={LIGHT.fg}>Exit Analysis</Tab>
        <Tab $w={60} $bg={LIGHT.bg} $fg={LIGHT.fg}>COMPS</Tab>
        <Tab $w={118} $bg={DARK.bg} $fg={DARK.fg} $edge={DARK.edge}>Sources and Uses</Tab>
        <Tab $w={57} $bg={DARK.bg} $fg={DARK.fg} $edge={DARK.edge}>Visuals</Tab>
        <Tab $w={34} $bg={DARK.bg} $fg={DARK.fg} $edge={DARK.edge}>W1</Tab>
        <Tab $w={37} $bg={DARK.bg} $fg={DARK.fg} $edge={DARK.edge}>W2</Tab>
        <Tab $w={36} $bg={DARK.bg} $fg={DARK.fg} $edge={DARK.edge}>W3</Tab>
        <Tab $w={140} $bg={DARK.bg} $fg={DARK.fg} $edge={DARK.edge}>Pro Forma - Monthly</Tab>
        <Tab $w={132} $bg={DARK.bg} $fg={DARK.fg} $edge={DARK.edge}>Pro Forma - Annual</Tab>
        <Tab $w={113} $bg={DARK.bg} $fg={DARK.fg} $edge={DARK.edge}>GP Fee Schedule</Tab>
      </TabList>
      <TabTail>
        <Slot $ml={12} $w={18}>L1</Slot>
        <Slot $ml={7}><Sep /></Slot>
        <Slot $ml={22} $w={12}><Glyph $size={11} $color='#333' $weight={900}>•••</Glyph></Slot>
        <Slot $ml={17} $w={12}><Glyph $size={17} $color='#333'>+</Glyph></Slot>
        <Slot $ml={20} $w={4}><Glyph $size={14} $color='#333' $weight={700}>⋮</Glyph></Slot>
        <Slot $ml={17} $w={6}><Glyph $size={9} $color='#333'>◀</Glyph></Slot>
        <Slot $ml={6}><ScrollThumb /></Slot>
        <Slot $ml={95} $w={6}><Glyph $size={9} $color='#333'>▶</Glyph></Slot>
      </TabTail>
    </TabsBar>
    <WhiteLine />

    <StatusBar>
      Ready
      <Slot $ml={17} $w={14}><MacroIcon /></Slot>
      <Slot $ml={16} $w={15}><AccessIcon /></Slot>
      <AccessText>Accessibility: Investigate</AccessText>
      <ViewBtn $on $w={37} $ml={1424}><ViewNormal /></ViewBtn>
      <ViewBtn $w={38}><ViewLayout /></ViewBtn>
      <ViewBtn $w={38}><ViewBreak /></ViewBtn>
      <Slot $ml={4} $w={10}>–</Slot>
      <ZoomTrack />
      <Slot $w={8}>+</Slot>
      <Slot $ml={9}>90%</Slot>
    </StatusBar>

    <Taskbar>
      <Noise width='1920' height='44'>
        <filter id='speckle'>
          <feTurbulence type='fractalNoise' baseFrequency='0.85' numOctaves='2' seed='4' />
          <feColorMatrix values='0 0 0 0 0.66  0 0 0 0 0.70  0 0 0 0 0.86  4 0 0 0 -1.6' />
        </filter>
        <rect width='1920' height='44' filter='url(#speckle)' />
      </Noise>
      <TaskInner>
        <Weather>
          <WeatherMark>
            <WeatherIcon />
            <Badge>1</Badge>
          </WeatherMark>
          <TwoLines><span>60°F</span><span>Cloudy</span></TwoLines>
        </Weather>
        <WinLogo />
        <TaskSearch>
          <SearchGlassDark />
          Search
          <GuySpot><BingGuy /></GuySpot>
        </TaskSearch>
        <TaskIcon $w={24} $ml={11}><TaskViewIcon /></TaskIcon>
        <TaskIcon $w={24} $ml={16}><FolderIcon /></TaskIcon>
        <TaskIcon $w={24} $ml={18} $running><OperaIcon /></TaskIcon>
        <TaskIcon $w={28} $ml={17} $running><ChromeIcon /></TaskIcon>
        <TaskIcon $w={24} $ml={14} $running><ExcelTask /></TaskIcon>
        <TaskIcon $w={24} $ml={18}><SnipIcon /></TaskIcon>
        <TaskIcon $w={18} $ml={20} $running><NotesIcon /></TaskIcon>
        <Tray>
          <Ico w={10} h={6}><path d='M1 5l4-4 4 4' stroke='#222' strokeWidth='1.3' /></Ico>
          <Slot $ml={16}>
            <Ico w={14} h={19}><path d='M1 2h8v2H3v9h8v3H6m-3 2h6M7 6h6v8H7z' stroke='#222' strokeWidth='1.1' /></Ico>
          </Slot>
          <Slot $ml={9}>
            <Ico w={13} h={15}><path d='M1 5h3l4-3v11l-4-3H1z' stroke='#333' /><path d='M10 5c1 1 1 4 0 5' stroke='#333' /></Ico>
          </Slot>
          <Slot $ml={15}>
            <TwoLines $right><span>2:25 PM</span><span>5/6/2025</span></TwoLines>
          </Slot>
        </Tray>
      </TaskInner>
    </Taskbar>
  </Page>
)

export default App
